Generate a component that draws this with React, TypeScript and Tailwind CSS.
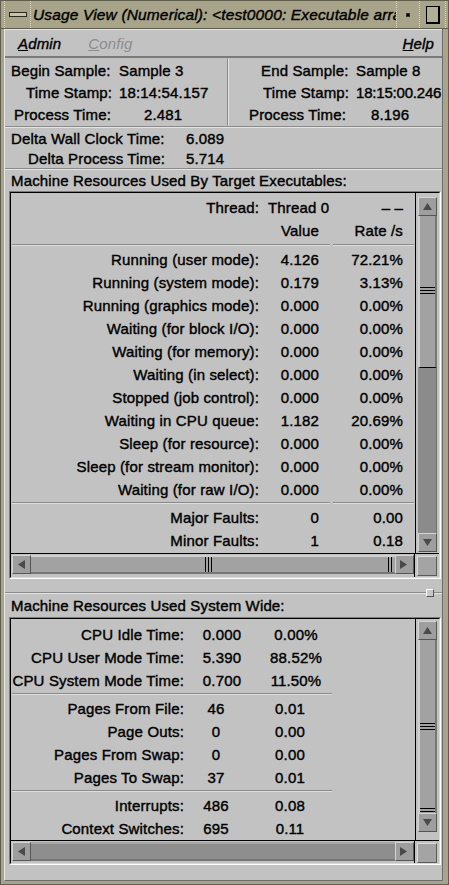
import React from "react";

const Tri = ({ dir }: { dir: "up" | "down" | "left" | "right" }) => {
  const pts: Record<string, string> = {
    up: "4.5,1 9,8 0,8",
    down: "0,1 9,1 4.5,8",
    left: "1,4.5 8,0 8,9",
    right: "0,0 7,4.5 0,9",
  };
  return (
    <svg width="9" height="9" viewBox="0 0 9 9">
      <polygon points={pts[dir]} fill="#4a4a4a" />
    </svg>
  );
};

const ArrowBtn = ({ dir }: { dir: "up" | "down" | "left" | "right" }) => (
  <div className="w-[19px] h-[19px] shrink-0 bg-[#9e9e9e] border border-t-[#d4d4d4] border-l-[#d4d4d4] border-b-[#555555] border-r-[#555555] flex items-center justify-center">
    <Tri dir={dir} />
  </div>
);

const Grip = () => (
  <div className="flex flex-col gap-[2px] w-full">
    <div className="h-[1px] bg-black" />
    <div className="h-[1px] bg-black" />
    <div className="h-[1px] bg-black" />
  </div>
);

const Corner = () => (
  <div className="w-[24px] flex items-start pt-[2px] pl-[2px]">
    <div className="w-[20px] h-[20px] bg-[#a4a4a4] border border-t-[#dcdcdc] border-l-[#dcdcdc] border-b-[#5a5a5a] border-r-[#5a5a5a]" />
  </div>
);

const Sep = ({ w1, w2 }: { w1: number; w2?: number }) => (
  <div className="h-[5px] flex items-start pt-[1px]">
    <div className="ml-[1px] h-[2px] border-t border-t-[#8a8a8a] border-b border-b-[#dedede]" style={{ width: w1 }} />
    {w2 ? (
      <div className="ml-[3px] h-[2px] border-t border-t-[#8a8a8a] border-b border-b-[#dedede]" style={{ width: w2 }} />
    ) : null}
  </div>
);

const topRows: [string, string, string][] = [
  ["Running (user mode):", "4.126", "72.21%"],
  ["Running (system mode):", "0.179", "3.13%"],
  ["Running (graphics mode):", "0.000", "0.00%"],
  ["Waiting (for block I/O):", "0.000", "0.00%"],
  ["Waiting (for memory):", "0.000", "0.00%"],
  ["Waiting (in select):", "0.000", "0.00%"],
  ["Stopped (job control):", "0.000", "0.00%"],
  ["Waiting in CPU queue:", "1.182", "20.69%"],
  ["Sleep (for resource):", "0.000", "0.00%"],
  ["Sleep (for stream monitor):", "0.000", "0.00%"],
  ["Waiting (for raw I/O):", "0.000", "0.00%"],
];

const TopRow = ({ r }: { r: [string, string, string] }) => (
  <div className="flex h-[23px] items-center whitespace-nowrap">
    <div className="w-[248px] text-right">{r[0]}</div>
    <div className="w-[60px] text-right">{r[1]}</div>
    <div className="w-[84px] text-right">{r[2]}</div>
  </div>
);

const BotRow = ({ r, vw, rw }: { r: [string, string, string]; vw: number; rw: number }) => (
  <div className="flex h-[23px] items-center whitespace-nowrap">
    <div className="w-[173px] text-right">{r[0]}</div>
    <div className="text-center" style={{ width: vw }}>{r[1]}</div>
    <div className="text-center" style={{ width: rw }}>{r[2]}</div>
  </div>
);

const Frame = ({ children }: { children: React.ReactNode }) => (
  <div className="ml-[4px] w-[432px] border border-t-[#7c7c7c] border-l-[#7c7c7c] border-b-white border-r-white">
    <div className="border border-t-black border-l-black border-b-[#d8d8d8] border-r-[#d8d8d8]">{children}</div>
  </div>
);

export default function App() {
  return (
    <div className="w-[449px] h-[885px] bg-[#a8a48a] border border-[#5f5d4c] text-black text-[15px] leading-none tracking-[0.15px] [-webkit-text-stroke-width:0.4px] [font-family:'Liberation_Sans',Arial,sans-serif] overflow-hidden">
      {/* title bar */}
      <div className="h-[28px] flex items-stretch border-b border-b-[#5f5d4c]">
        <div className="w-[3px]" />
        <div className="w-[27px] flex items-center justify-center border-x border-dotted border-[#dcd8bd]">
          <div className="w-[18px] h-[5px] bg-[#c8c4a8] border border-[#2a2a20]" />
        </div>
        <div className="flex-1 overflow-hidden whitespace-nowrap italic text-[15.5px] pl-[2px] flex items-center">
          Usage View (Numerical): &lt;test0000: Executable array
        </div>
        <div className="w-[24px] flex items-center justify-center border-x border-dotted border-[#dcd8bd]">
          <div className="w-[4px] h-[4px] bg-black border border-[#333]" />
        </div>
        <div className="w-[26px] flex items-center justify-center border-r border-dotted border-[#dcd8bd]">
          <div className="w-[14px] h-[18px] border border-black border-r-2 border-b-2 bg-[#b3af95]" />
        </div>
        <div className="w-[2px]" />
      </div>

      {/* content */}
      <div className="ml-[3px] w-[439px] h-[852px] bg-[#c2c2c2] border-l border-l-[#e6e6e6] border-r border-r-[#6e6e6e] border-b border-b-[#6e6e6e]">
        {/* menubar */}
        <div className="h-[29px] flex items-center border-t border-t-[#e6e6e6] border-b-2 border-b-[#7a7a7a] italic text-[15px]">
          <span className="ml-[13px]"><span className="underline">A</span>dmin</span>
          <span className="ml-[27px] text-[#8c8c8c] [-webkit-text-stroke-width:0px]"><span className="underline">C</span>onfig</span>
          <span className="ml-auto mr-[8px]"><span className="underline">H</span>elp</span>
        </div>

        {/* info */}
        <div className="flex h-[68px] pt-[1px]">
          <div className="w-[222px]">
            <div className="grid grid-cols-[114px_1fr] h-[22px] items-center whitespace-nowrap">
              <span className="pl-[6px]">Begin Sample:</span><span>Sample 3</span>
            </div>
            <div className="grid grid-cols-[114px_1fr] h-[22px] items-center whitespace-nowrap">
              <span className="pl-[21px]">Time Stamp:</span><span>18:14:54.157</span>
            </div>
            <div className="grid grid-cols-[114px_1fr] h-[22px] items-center whitespace-nowrap">
              <span className="pl-[9px]">Process Time:</span><span className="pl-[25px]">2.481</span>
            </div>
          </div>
          <div className="w-[2px] h-[66px] border-l border-l-[#8a8a8a] border-r border-r-[#e4e4e4]" />
          <div className="flex-1">
            <div className="grid grid-cols-[127px_1fr] h-[22px] items-center whitespace-nowrap">
              <span className="pl-[32px]">End Sample:</span><span>Sample 8</span>
            </div>
            <div className="grid grid-cols-[127px_1fr] h-[22px] items-center whitespace-nowrap">
              <span className="pl-[34px]">Time Stamp:</span><span className="tracking-[-0.2px]">18:15:00.246</span>
            </div>
            <div className="grid grid-cols-[127px_1fr] h-[22px] items-center whitespace-nowrap">
              <span className="pl-[20px]">Process Time:</span><span className="pl-[15px]">8.196</span>
            </div>
          </div>
        </div>
        <div className="h-[2px] border-t border-t-[#8a8a8a] border-b border-b-[#e4e4e4]" />
        <div className="grid grid-cols-[181px_1fr] h-[20px] items-center whitespace-nowrap">
          <span className="pl-[6px]">Delta Wall Clock Time:</span><span>6.089</span>
        </div>
        <div className="grid grid-cols-[181px_1fr] h-[20px] items-center whitespace-nowrap">
          <span className="pl-[23px]">Delta Process Time:</span><span>5.714</span>
        </div>
        <div className="h-[2px] border-t border-t-[#8a8a8a] border-b border-b-[#e4e4e4]" />
        <div className="h-[21px] flex items-center pl-[6px] whitespace-nowrap">
          Machine Resources Used By Target Executables:
        </div>

        {/* frame 1 */}
        <Frame>
          <div className="flex h-[360px]">
            <div className="flex-1 pt-[3px] border-r border-r-black">
              <div className="flex h-[23px] items-center whitespace-nowrap">
                <div className="w-[248px] text-right">Thread:</div>
                <div className="w-[60px] pl-[9px] overflow-visible">Thread 0</div>
                <div className="w-[84px] text-right">– –</div>
              </div>
              <div className="flex h-[23px] items-center whitespace-nowrap">
                <div className="w-[248px]" />
                <div className="w-[60px] text-right">Value</div>
                <div className="w-[84px] text-right">Rate /s</div>
              </div>
              <div className="h-[6px] flex items-start pt-[2px]">
                <div className="ml-[1px] w-[318px] h-[2px] border-t border-t-[#8a8a8a] border-b border-b-[#dedede]" />
                <div className="ml-[3px] w-[81px] h-[2px] border-t border-t-[#8a8a8a] border-b border-b-[#dedede]" />
              </div>
              {topRows.map((r, i) => (
                <TopRow key={i} r={r} />
              ))}
              <Sep w1={318} w2={81} />
              <TopRow r={["Major Faults:", "0", "0.00"]} />
              <TopRow r={["Minor Faults:", "1", "0.18"]} />
            </div>
            <div className="w-[23px] pl-[2px] pt-[4px] flex flex-col">
              <ArrowBtn dir="up" />
              <div className="w-[19px] h-[152px] bg-[#a2a2a2] border-l-2 border-l-[#cfcfcf] border-r-2 border-r-[#767676] border-b border-b-black flex flex-col justify-start pt-[71px]">
                <Grip />
              </div>
              <div className="w-[19px] h-[165px] bg-[#8b8b8b] border-r border-r-[#6e6e6e]" />
              <ArrowBtn dir="down" />
            </div>
          </div>
          <div className="flex h-[24px] border-t border-t-black">
            <div className="flex-1 flex items-start pt-[1px] pl-[1px] border-r border-r-black">
              <ArrowBtn dir="left" />
              <div className="flex-1 h-[19px] bg-[#a2a2a2] border-t-2 border-t-[#cfcfcf] border-b-2 border-b-[#767676] relative">
                <div className="absolute left-[174px] top-0 h-full w-[8px] flex gap-[2px]">
                  <div className="w-[1px] h-full bg-black" />
                  <div className="w-[1px] h-full bg-black" />
                  <div className="w-[1px] h-full bg-black" />
                </div>
                <div className="absolute right-[2px] top-0 h-full w-[5px] flex gap-[2px]">
                  <div className="w-[1px] h-full bg-black" />
                  <div className="w-[1px] h-full bg-black" />
                </div>
              </div>
              <ArrowBtn dir="right" />
            </div>
            <Corner />
          </div>
        </Frame>

        {/* sash */}
        <div className="h-[13px]" />
        <div className="relative h-[2px] border-t border-t-[#8a8a8a] border-b border-b-[#e4e4e4]">
          <div className="absolute left-[421px] top-[-4px] w-[8px] h-[8px] bg-[#c8c8c8] border border-t-white border-l-white border-b-[#555] border-r-[#555]" />
        </div>
        <div className="h-[23px] flex items-center pl-[6px] whitespace-nowrap">
          Machine Resources Used System Wide:
        </div>

        {/* frame 2 */}
        <Frame>
          <div className="flex h-[221px]">
            <div className="flex-1 pt-[4px] border-r border-r-black">
              <BotRow r={["CPU Idle Time:", "0.000", "0.00%"]} vw={76} rw={72} />
              <BotRow r={["CPU User Mode Time:", "5.390", "88.52%"]} vw={76} rw={72} />
              <BotRow r={["CPU System Mode Time:", "0.700", "11.50%"]} vw={76} rw={72} />
              <Sep w1={320} />
              <BotRow r={["Pages From File:", "46", "0.01"]} vw={64} rw={84} />
              <BotRow r={["Page Outs:", "0", "0.00"]} vw={64} rw={84} />
              <BotRow r={["Pages From Swap:", "0", "0.00"]} vw={64} rw={84} />
              <BotRow r={["Pages To Swap:", "37", "0.01"]} vw={64} rw={84} />
              <Sep w1={320} />
              <BotRow r={["Interrupts:", "486", "0.08"]} vw={64} rw={84} />
              <BotRow r={["Context Switches:", "695", "0.11"]} vw={64} rw={84} />
            </div>
            <div className="w-[23px] pl-[2px] pt-[2px] flex flex-col">
              <ArrowBtn dir="up" />
              <div className="w-[19px] h-[173px] bg-[#a2a2a2] border-l-2 border-l-[#cfcfcf] border-r-2 border-r-[#767676] flex flex-col justify-between pt-[83px]">
                <Grip />
                <div className="flex flex-col gap-[2px] mb-[1px]">
                  <div className="h-[1px] bg-black" />
                  <div className="h-[1px] bg-black" />
                </div>
              </div>
              <ArrowBtn dir="down" />
            </div>
          </div>
          <div className="flex h-[23px] border-t border-t-black">
            <div className="flex-1 flex items-start pt-[1px] pl-[1px] border-r border-r-black">
              <ArrowBtn dir="left" />
              <div className="flex-1 h-[19px] bg-[#8e8e8e] border-t-2 border-t-[#a8a8a8] border-b-2 border-b-[#767676]" />
              <ArrowBtn dir="right" />
            </div>
            <Corner />
          </div>
        </Frame>
      </div>
    </div>
  );
}
